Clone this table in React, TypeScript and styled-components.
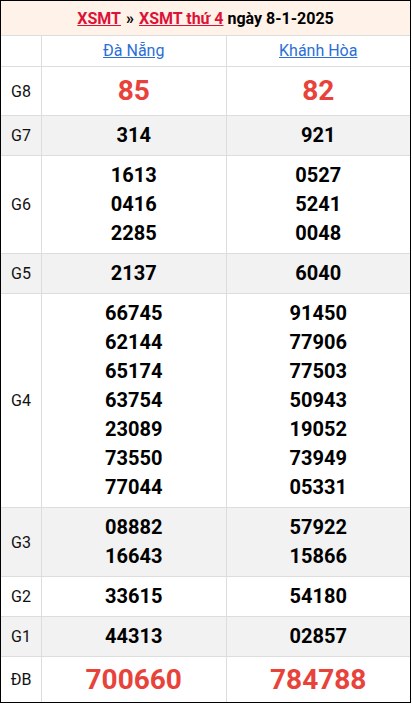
import * as React from "react";
import styled, { createGlobalStyle } from "styled-components";

const GlobalStyle = createGlobalStyle`
  html, body {
    margin: 0;
    padding: 0;
    background: #fff;
    font-family: Roboto, "Liberation Sans", Arial, sans-serif;
    color: #000;
  }
`;

type Kind = "normal" | "top" | "special";

interface IPrize {
  label: string;
  left: string[];
  right: string[];
  shaded?: boolean;
  kind?: Kind;
}

const prizes: IPrize[] = [
  { label: "G8", left: ["85"], right: ["82"], kind: "top" },
  { label: "G7", left: ["314"], right: ["921"], shaded: true },
  { label: "G6", left: ["1613", "0416", "2285"], right: ["0527", "5241", "0048"] },
  { label: "G5", left: ["2137"], right: ["6040"], shaded: true },
  {
    label: "G4",
    left: ["66745", "62144", "65174", "63754", "23089", "73550", "77044"],
    right: ["91450", "77906", "77503", "50943", "19052", "73949", "05331"],
  },
  { label: "G3", left: ["08882", "16643"], right: ["57922", "15866"], shaded: true },
  { label: "G2", left: ["33615"], right: ["54180"] },
  { label: "G1", left: ["44313"], right: ["02857"], shaded: true },
  { label: "ĐB", left: ["700660"], right: ["784788"], kind: "special" },
];

const lineHeights: Record<Kind, string> = {
  normal: "29px",
  top: "38px",
  special: "35px",
};

const Board = styled.div`
  box-sizing: border-box;
  width: 411px;
  border: 1px solid #000;
`;

const Title = styled.div`
  height: 34px;
  display: flex;
  align-items: center;
  justify-content: center;
  background: #fff2e8;
  font-size: 16px;
  font-weight: 700;
  color: #000;
`;

const TitleLink = styled.a`
  color: #dc1239;
  text-decoration: underline;
`;

const Sep = styled.span`
  margin: 0 5px;
`;

const Row = styled.div<{ $shaded?: boolean }>`
  display: grid;
  grid-template-columns: 40px 1fr 1fr;
  border-top: 1px solid #ddd;
  background: ${(p) => (p.$shaded ? "#f2f2f2" : "#fff")};
`;

const Label = styled.div`
  display: flex;
  align-items: center;
  justify-content: center;
  font-size: 16px;
  color: #111;
`;

const Cell = styled.div`
  border-left: 1px solid #ddd;
  display: flex;
  flex-direction: column;
  align-items: center;
  justify-content: center;
  padding: 5px 0;
`;

const Province = styled.a`
  font-size: 16px;
  line-height: 20px;
  color: #2a6fd6;
  text-decoration: underline;
`;

const Number = styled.div<{ $kind: Kind }>`
  font-weight: 700;
  font-size: ${(p) => (p.$kind === "normal" ? "20px" : "28px")};
  line-height: ${(p) => lineHeights[p.$kind]};
  color: ${(p) => (p.$kind === "normal" ? "#000" : "#e8433a")};
`;

export default function App() {
  return (
    <>
      <GlobalStyle />
      <Board>
        <Title>
          <TitleLink>XSMT</TitleLink>
          <Sep>»</Sep>
          <TitleLink>XSMT thứ 4</TitleLink>
          &nbsp;ngày 8-1-2025
        </Title>
        <Row>
          <Label />
          <Cell>
            <Province>Đà Nẵng</Province>
          </Cell>
          <Cell>
            <Province>Khánh Hòa</Province>
          </Cell>
        </Row>
        {prizes.map((p) => (
          <Row key={p.label} $shaded={p.shaded}>
            <Label>{p.label}</Label>
            <Cell>
              {p.left.map((n) => (
                <Number key={n} $kind={p.kind ?? "normal"}>{n}</Number>
              ))}
            </Cell>
            <Cell>
              {p.right.map((n) => (
                <Number key={n} $kind={p.kind ?? "normal"}>{n}</Number>
              ))}
            </Cell>
          </Row>
        ))}
      </Board>
    </>
  );
}
